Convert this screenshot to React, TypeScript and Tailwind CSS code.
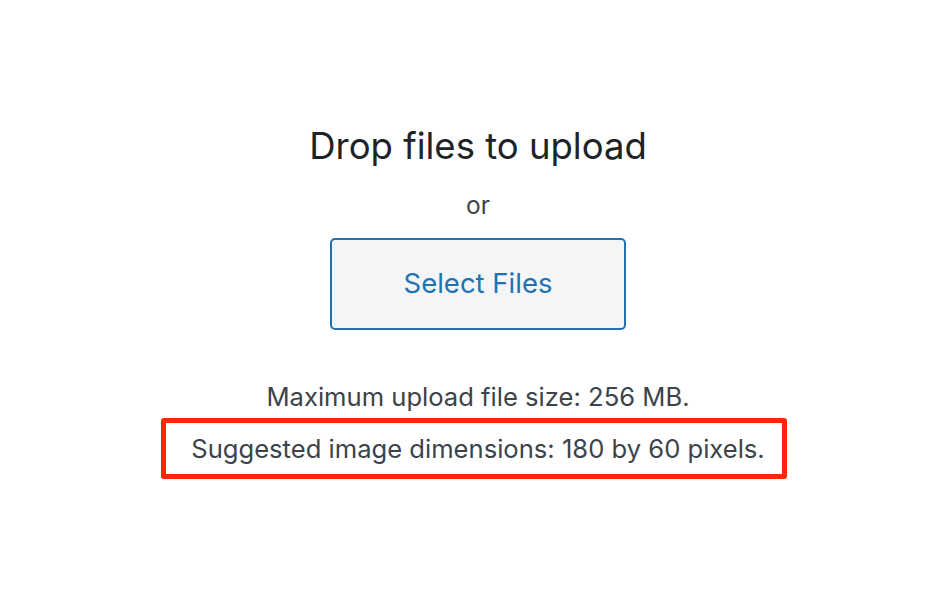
import React from "react";

// Media upload drop zone, with the suggested-dimensions hint boxed in red
const App: React.FC = () => {
  return (
    <div
      className="w-full h-[590px] bg-white flex flex-col items-center pt-[125px]"
      style={{ fontFamily: "Inter, 'Liberation Sans', sans-serif" }}
    >
      <h2 className="ml-2 text-[36.5px] leading-[42px] font-normal text-[#1d2327]">
        Drop files to upload
      </h2>
      <p className="ml-2 mt-[23px] text-[24.5px] leading-[30px] text-[#3c434a]">or</p>
      <button
        type="button"
        className="ml-2 mt-[18px] w-[296px] h-[92px] rounded-[5px] border-2 border-[#2271b1] bg-[#f3f5f6] text-[27.5px] text-[#2271b1]"
      >
        Select Files
      </button>
      <p className="ml-2 mt-[52px] text-[25.6px] leading-[30px] text-[#3c434a]">
        Maximum upload file size: 256 MB.
      </p>
      <div className="mt-[6px] w-[626px] h-[61px] rounded-[3px] border-[5px] border-[#ff2600] flex items-center justify-center pl-2">
        <p className="text-[25.6px] leading-[30px] text-[#3c434a]">
          Suggested image dimensions: 180 by 60 pixels.
        </p>
      </div>
    </div>
  );
};

export default App;
